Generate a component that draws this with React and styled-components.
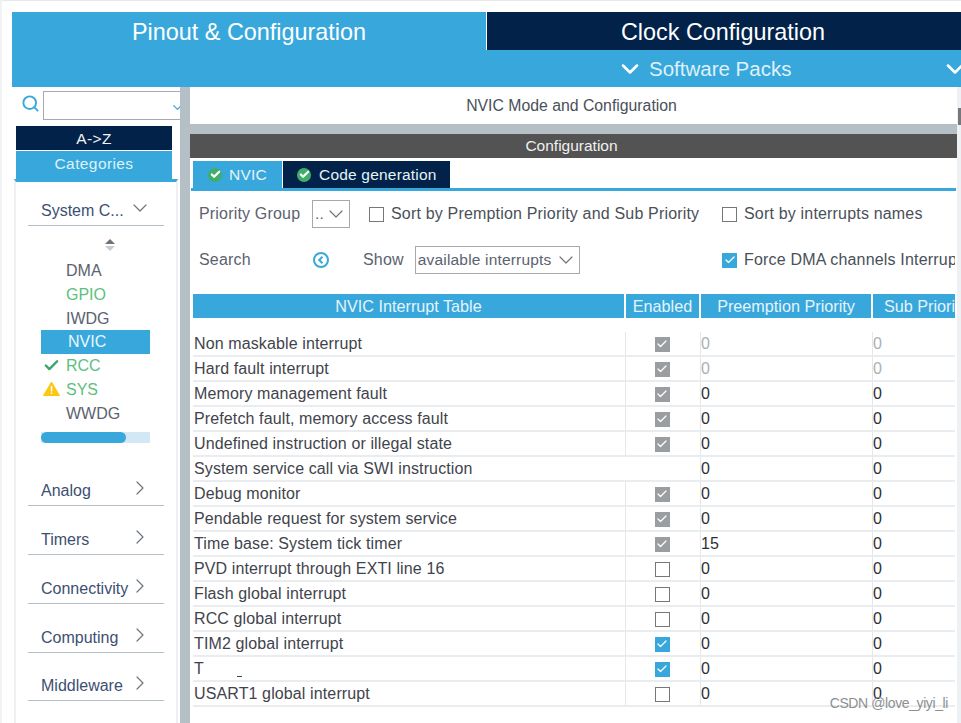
import styled, { createGlobalStyle } from 'styled-components'
import { ChevronDown, ChevronRight, Search as SearchIcon, Check } from 'lucide-react'

const Global = createGlobalStyle`
  html, body { margin: 0; padding: 0; background: #fff; }
  * { box-sizing: border-box; }
`

const blue = '#38a8dc'
const navy = '#02224a'
const ink = '#3f4a5a'

const Page = styled.div`
  position: relative;
  width: 961px;
  height: 723px;
  overflow: hidden;
  padding: 12px 0 0 12px;
  background: #fff;
  box-shadow: inset 2px 0 #f0f2f4, inset 0 1px #e6e9ec;
  font-family: "Liberation Sans", Arial, sans-serif;
  font-size: 15px;
  color: ${ink};
`

const TabRow = styled.div`
  display: flex;
  height: 38px;
`

const TopTab = styled.div`
  width: ${p => p.$w}px;
  flex: none;
  background: ${p => (p.$active ? blue : navy)};
  border-left: ${p => (p.$active ? 0 : '1px solid #fff')};
  padding-right: ${p => (p.$active ? 0 : 2)}px;
  color: #fff;
  font-size: 23.4px;
  text-align: center;
  line-height: 40px;
`

const PacksRow = styled.div`
  position: relative;
  height: 37px;
  display: flex;
  align-items: center;
  padding-left: 604px;
  gap: 5px;
  background: ${blue};
  color: #dff1fa;
  font-size: 20.5px;
  svg { flex: none; color: #fff; }
`

const EdgeChevron = styled.span`
  position: absolute;
  right: -8px;
  top: 5px;
  color: #fff;
`

const Body = styled.div`
  display: flex;
  height: 636px;
`

const Sidebar = styled.aside`
  width: 168px;
  flex: none;
  overflow: hidden;
`

const SearchRow = styled.div`
  height: 39px;
  display: flex;
  align-items: flex-start;
  padding: 4px 0 0 9px;
  gap: 3px;
  svg { margin-top: 3px; flex: none; color: ${blue}; }
`

const SearchBox = styled.div`
  width: 145px;
  height: 29px;
  flex: none;
  display: flex;
  align-items: center;
  justify-content: flex-end;
  padding-right: 2px;
  border: 1px solid #a5a9ac;
  color: #8a9096;
`

const SortButton = styled.div`
  width: 156px;
  margin-left: 4px;
  background: ${p => (p.$active ? blue : navy)};
  color: ${p => (p.$active ? '#dff1fa' : '#f0f3f6')};
  height: ${p => (p.$active ? 28 : 24)}px;
  margin-top: ${p => (p.$active ? 1 : 0)}px;
  text-align: center;
  font-size: 15.5px;
  letter-spacing: 0.4px;
  line-height: ${p => (p.$active ? 26 : 25)}px;
`

const Panel = styled.div`
  width: 164px;
  height: 545px;
  margin-left: 2px;
  border-top: 3px solid ${blue};
  border-left: 2px solid #eef1f3;
  border-right: 2px solid #eef1f3;
  padding: 0 12px;
`

const Category = styled.div`
  height: ${p => p.$h || 49}px;
  width: 136px;
  display: flex;
  align-items: flex-end;
  justify-content: space-between;
  padding: 0 12px 5px 13px;
  border-bottom: 1px solid #b5c0c6;
  color: #3d4f72;
  font-size: 16px;
  svg { flex: none; color: #6d767d; }
`

const ScrollArrows = styled.div`
  height: 21px;
  margin-top: 12px;
  padding-left: 76px;
  svg { display: block; }
`

const PeripheralList = styled.ul`
  list-style: none;
  margin: 0 0 0 13px;
  padding: 0;
`

const Peripheral = styled.li`
  position: relative;
  height: 23.8px;
  line-height: 24px;
  padding-left: 25px;
  width: 109px;
  font-size: 16px;
  color: ${p => (p.$tone === 'ok' ? '#5cbf7e' : '#5b6270')};
  ${p => p.$selected && `background: ${blue}; color: #eaf6fc; padding-left: 27px;`}
`

const StatusMark = styled.span`
  position: absolute;
  left: 2px;
  top: 3px;
  display: flex;
`

const ScrollTrack = styled.div`
  width: 109px;
  height: 11px;
  margin: 6px 0 14px 13px;
  background: #d4e7f4;
`

const ScrollThumb = styled.div`
  width: 85px;
  height: 100%;
  border-radius: 6px;
  background: ${blue};
`

const Divider = styled.div`
  width: 10px;
  flex: none;
  background: #b5c0c6;
`

const Main = styled.main`
  width: 767px;
  flex: none;
`

const EdgeRail = styled.div`
  width: 4px;
  flex: none;
  background: #eef1f3;
`

const RailThumb = styled.div`
  width: 3px;
  height: 17px;
  margin: 21px 0 0 1px;
  background: #74787c;
`

const TitleBar = styled.div`
  height: 37px;
  text-align: center;
  line-height: 37px;
  font-size: 15.8px;
  color: #4a5058;
  padding-right: 4px;
`

const GreyBand = styled.div`
  height: 10px;
  background: #b5c0c6;
`

const DarkBar = styled.div`
  height: 24px;
  background: #525352;
  color: #f0f0f0;
  text-align: center;
  font-size: 15.5px;
  line-height: 24px;
  padding-right: 4px;
`

const SubTabs = styled.div`
  display: flex;
  height: 30px;
  margin: 3px 1px 0 1px;
  padding-left: 2px;
  gap: 1px;
  border-bottom: 3px solid ${blue};
`

const SubTab = styled.div`
  width: ${p => p.$w}px;
  display: flex;
  align-items: center;
  gap: ${p => p.$gap}px;
  padding-left: ${p => p.$pad}px;
  background: ${p => (p.$active ? blue : navy)};
  color: #e6f2f8;
  font-size: 15.5px;
  letter-spacing: 0.2px;
`

const OkDot = styled.span`
  width: 14px;
  height: 14px;
  flex: none;
  border-radius: 50%;
  background: #3fae6a;
  display: flex;
  align-items: center;
  justify-content: center;
  color: #fff;
`

const Options = styled.div`
  display: grid;
  grid-template-columns: 113px 57px 353px 1fr;
  grid-template-rows: 46px 46px;
  align-items: center;
  align-content: start;
  height: 103px;
  padding: 0 2px 0 9px;
  font-size: 16px;
  letter-spacing: 0.18px;
`

const OptionLabel = styled.span`
  color: #5b6270;
  white-space: nowrap;
`

const SearchLabel = styled(OptionLabel)`
  width: 113px;
`

const Select = styled.div`
  width: ${p => p.$w}px;
  height: 28px;
  display: flex;
  align-items: center;
  justify-content: space-between;
  padding: 0 1px 0 2px;
  border: 1px solid #a5a9ac;
  color: #5b6270;
  font-size: 15.5px;
  svg { flex: none; color: #6d767d; }
`

const CheckLine = styled.label`
  display: flex;
  align-items: center;
  gap: 7px;
  white-space: nowrap;
  color: #4a5058;
  overflow: hidden;
`

const Box = styled.span`
  width: 15px;
  height: 15px;
  flex: none;
  display: flex;
  align-items: center;
  justify-content: center;
  border: ${p => (p.$state === 'off' ? '1px solid #777' : '0')};
  background: ${p => (p.$state === 'on' ? blue : p.$state === 'locked' ? '#9a9ea1' : '#fff')};
  color: #fff;
`

const SearchLine = styled.div`
  display: flex;
  align-items: center;
  grid-column: 1 / span 3;
`

const ShowLabel = styled(OptionLabel)`
  margin: 0 11px 0 33px;
`

const Table = styled.div`
  width: 762px;
  margin-left: 3px;
`

const Columns = `
  display: grid;
  grid-template-columns: 433px 75px 172px 82px;
`

const HeaderRow = styled.div`
  ${Columns}
  height: 24px;
  margin-bottom: 14px;
`

const HeaderCell = styled.div`
  background: ${blue};
  color: #e6f3fa;
  margin-right: 2px;
  text-align: center;
  line-height: 24px;
  font-size: 16.2px;
  white-space: nowrap;
  overflow: hidden;
  &:last-child { margin-right: 0; text-align: left; padding-left: 11px; }
`

const Row = styled.div`
  ${Columns}
  height: 25px;
  border-bottom: 2px solid #e9edf0;
`

const NameCell = styled.div`
  font-size: 16px;
  line-height: 24px;
  padding-left: 1px;
  color: #3f444c;
  letter-spacing: 0.12px;
  white-space: nowrap;
  border-right: ${p => (p.$plain ? 0 : '1px solid #e4e8eb')};
`

const HiddenTail = styled.span`
  display: inline-block;
  width: 5px;
  height: 1px;
  margin-left: 33px;
  vertical-align: -3px;
  background: #3f444c;
`

const EnabledCell = styled.div`
  display: flex;
  align-items: center;
  justify-content: center;
  padding-right: 2px;
  border-right: 1px solid #e4e8eb;
`

const ValueCell = styled.div`
  font-size: 16px;
  line-height: 24px;
  padding-left: 0;
  color: ${p => (p.$muted ? '#aab0b5' : '#2c3038')};
  border-right: ${p => (p.$last ? 0 : '1px solid #e4e8eb')};
`

const Watermark = styled.div`
  position: absolute;
  right: 13px;
  top: 695px;
  font-size: 14px;
  letter-spacing: -0.4px;
  color: #8d8f91;
`

const interrupts = [
  ['Non maskable interrupt', 'locked', '0', true],
  ['Hard fault interrupt', 'locked', '0', true],
  ['Memory management fault', 'locked', '0'],
  ['Prefetch fault, memory access fault', 'locked', '0'],
  ['Undefined instruction or illegal state', 'locked', '0'],
  ['System service call via SWI instruction', null, '0'],
  ['Debug monitor', 'locked', '0'],
  ['Pendable request for system service', 'locked', '0'],
  ['Time base: System tick timer', 'locked', '15'],
  ['PVD interrupt through EXTI line 16', 'off', '0'],
  ['Flash global interrupt', 'off', '0'],
  ['RCC global interrupt', 'off', '0'],
  ['TIM2 global interrupt', 'on', '0'],
  ['T', 'on', '0'],
  ['USART1 global interrupt', 'off', '0'],
]

const peripherals = [
  { name: 'DMA' },
  { name: 'GPIO', tone: 'ok' },
  { name: 'IWDG' },
  { name: 'NVIC', selected: true },
  { name: 'RCC', tone: 'ok', mark: 'check' },
  { name: 'SYS', tone: 'ok', mark: 'warn' },
  { name: 'WWDG' },
]

const closedCategories = ['Analog', 'Timers', 'Connectivity', 'Computing', 'Middleware']

const WarnIcon = () => (
  <svg width="17" height="15" viewBox="0 0 17 15">
    <path d="M8.5 1 L16.5 14.5 H0.5 Z" fill="#fbc80f" stroke="#fbc80f" strokeLinejoin="round" />
    <rect x="7.8" y="5" width="1.5" height="5.5" fill="#fff" />
    <rect x="7.8" y="11.5" width="1.5" height="1.5" fill="#fff" />
  </svg>
)

const BackIcon = () => (
  <svg width="18" height="18" viewBox="0 0 18 18" fill="none" stroke={blue}>
    <circle cx="9" cy="9" r="7" strokeWidth="2" />
    <path d="M10.5 5.8 L7.2 9 L10.5 12.2" strokeWidth="2" />
  </svg>
)

const SortArrows = () => (
  <svg width="12" height="14" viewBox="0 0 12 14">
    <path d="M6 1 L11 6 H1 Z" fill="#6f7478" />
    <path d="M6 13 L11 8 H1 Z" fill="#c9cccf" />
  </svg>
)

const App = () => {
  return (
    <Page>
      <Global />
      <TabRow>
        <TopTab $active $w={474}>Pinout &amp; Configuration</TopTab>
        <TopTab $w={475}>Clock Configuration</TopTab>
      </TabRow>
      <PacksRow>
        <ChevronDown size={28} strokeWidth={2.2} />
        Software Packs
        <EdgeChevron><ChevronDown size={28} strokeWidth={2.2} /></EdgeChevron>
      </PacksRow>
      <Body>
        <Sidebar>
          <SearchRow>
            <SearchIcon size={19} strokeWidth={2.4} />
            <SearchBox><ChevronDown size={15} /></SearchBox>
          </SearchRow>
          <SortButton>A-&gt;Z</SortButton>
          <SortButton $active>Categories</SortButton>
          <Panel>
            <Category $h={44}>System C...<ChevronDown size={24} strokeWidth={1.2} /></Category>
            <ScrollArrows><SortArrows /></ScrollArrows>
            <PeripheralList>
              {peripherals.map(p => (
                <Peripheral key={p.name} $tone={p.tone} $selected={p.selected}>
                  {p.mark === 'check' && (
                    <StatusMark><Check size={17} strokeWidth={3.4} color="#3aa56a" /></StatusMark>
                  )}
                  {p.mark === 'warn' && <StatusMark><WarnIcon /></StatusMark>}
                  {p.name}
                </Peripheral>
              ))}
            </PeripheralList>
            <ScrollTrack><ScrollThumb /></ScrollTrack>
            {closedCategories.map(name => (
              <Category key={name} $h={name === 'Middleware' ? 48 : 49}>
                {name}
                <ChevronRight size={24} strokeWidth={1.2} />
              </Category>
            ))}
          </Panel>
        </Sidebar>
        <Divider />
        <Main>
          <TitleBar>NVIC Mode and Configuration</TitleBar>
          <GreyBand />
          <DarkBar>Configuration</DarkBar>
          <SubTabs>
            <SubTab $active $w={89} $pad={15} $gap={7}>
              <OkDot><Check size={11} strokeWidth={5} /></OkDot>NVIC
            </SubTab>
            <SubTab $w={167} $pad={14} $gap={8}>
              <OkDot><Check size={11} strokeWidth={5} /></OkDot>Code generation
            </SubTab>
          </SubTabs>
          <Options>
            <OptionLabel>Priority Group</OptionLabel>
            <Select $w={38}>..<ChevronDown size={24} strokeWidth={1.2} /></Select>
            <CheckLine><Box $state="off" />Sort by Premption Priority and Sub Priority</CheckLine>
            <CheckLine><Box $state="off" />Sort by interrupts names</CheckLine>
            <SearchLine>
              <SearchLabel>Search</SearchLabel>
              <BackIcon />
              <ShowLabel>Show</ShowLabel>
              <Select $w={165}>available interrupts<ChevronDown size={24} strokeWidth={1.2} /></Select>
            </SearchLine>
            <CheckLine>
              <Box $state="on"><Check size={12} strokeWidth={2.5} /></Box>
              Force DMA channels Interrupts
            </CheckLine>
          </Options>
          <Table>
            <HeaderRow>
              <HeaderCell>NVIC Interrupt Table</HeaderCell>
              <HeaderCell>Enabled</HeaderCell>
              <HeaderCell>Preemption Priority</HeaderCell>
              <HeaderCell>Sub Priority</HeaderCell>
            </HeaderRow>
            {interrupts.map(([name, state, value, muted], i) => (
              <Row key={i}>
                <NameCell $plain={!state}>
                  {name}
                  {name === 'T' && <HiddenTail />}
                </NameCell>
                <EnabledCell>
                  {state && (
                    <Box $state={state}>
                      {state !== 'off' && <Check size={12} strokeWidth={2.5} />}
                    </Box>
                  )}
                </EnabledCell>
                <ValueCell $muted={muted}>{value}</ValueCell>
                <ValueCell $muted={muted} $last>0</ValueCell>
              </Row>
            ))}
          </Table>
        </Main>
        <EdgeRail><RailThumb /></EdgeRail>
      </Body>
      <Watermark>CSDN @love_yiyi_li</Watermark>
    </Page>
  )
}

export default App
